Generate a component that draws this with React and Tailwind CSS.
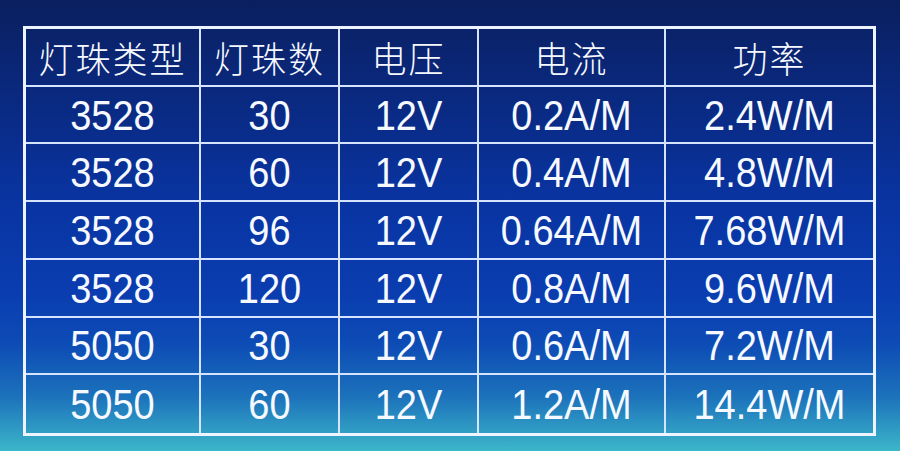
const header = ['灯珠类型', '灯珠数', '电压', '电流', '功率']

const rows = [
  ['3528', '30', '12V', '0.2A/M', '2.4W/M'],
  ['3528', '60', '12V', '0.4A/M', '4.8W/M'],
  ['3528', '96', '12V', '0.64A/M', '7.68W/M'],
  ['3528', '120', '12V', '0.8A/M', '9.6W/M'],
  ['5050', '30', '12V', '0.6A/M', '7.2W/M'],
  ['5050', '60', '12V', '1.2A/M', '14.4W/M'],
]

function Cell({ children, col, row, cjk }) {
  const lastCol = col === 4
  const lastRow = row === 6
  return (
    <div
      className={
        'flex min-h-0 items-center justify-center leading-none border-[#d6e4ff] ' +
        (lastCol ? '' : 'border-r-2 ') +
        (lastRow ? '' : 'border-b-2 ')
      }
    >
      {cjk ? (
        <span className="inline-block font-['Noto_Sans_CJK_SC',sans-serif] font-light text-[35px] tracking-[2px] scale-y-[1.05]">
          {children}
        </span>
      ) : (
        <span className="inline-block font-['Liberation_Sans',Arial,sans-serif] text-[38px] pt-[2px] scale-y-[1.1]">
          {children}
        </span>
      )}
    </div>
  )
}

export default function App() {
  return (
    <div className="h-[451px] w-[900px] overflow-hidden bg-[linear-gradient(180deg,#0a1f5e_0%,#0a2676_15%,#0934a2_45%,#0a3db0_65%,#0d4bb5_76%,#1c72bb_88%,#3cb6c9_100%)] pl-[23px] pt-[26px]">
      <div className="grid h-[410px] w-[853px] grid-cols-[175px_139px_139px_187px_207px] grid-rows-[repeat(7,minmax(0,1fr))] border-[3px] border-[#eef4ff] text-[#f6f9ff]">
        {header.map((h, i) => (
          <Cell key={'h' + i} col={i} row={0} cjk>
            {h}
          </Cell>
        ))}
        {rows.map((r, ri) =>
          r.map((v, ci) => (
            <Cell key={ri + '-' + ci} col={ci} row={ri + 1}>
              {v}
            </Cell>
          ))
        )}
      </div>
    </div>
  )
}
